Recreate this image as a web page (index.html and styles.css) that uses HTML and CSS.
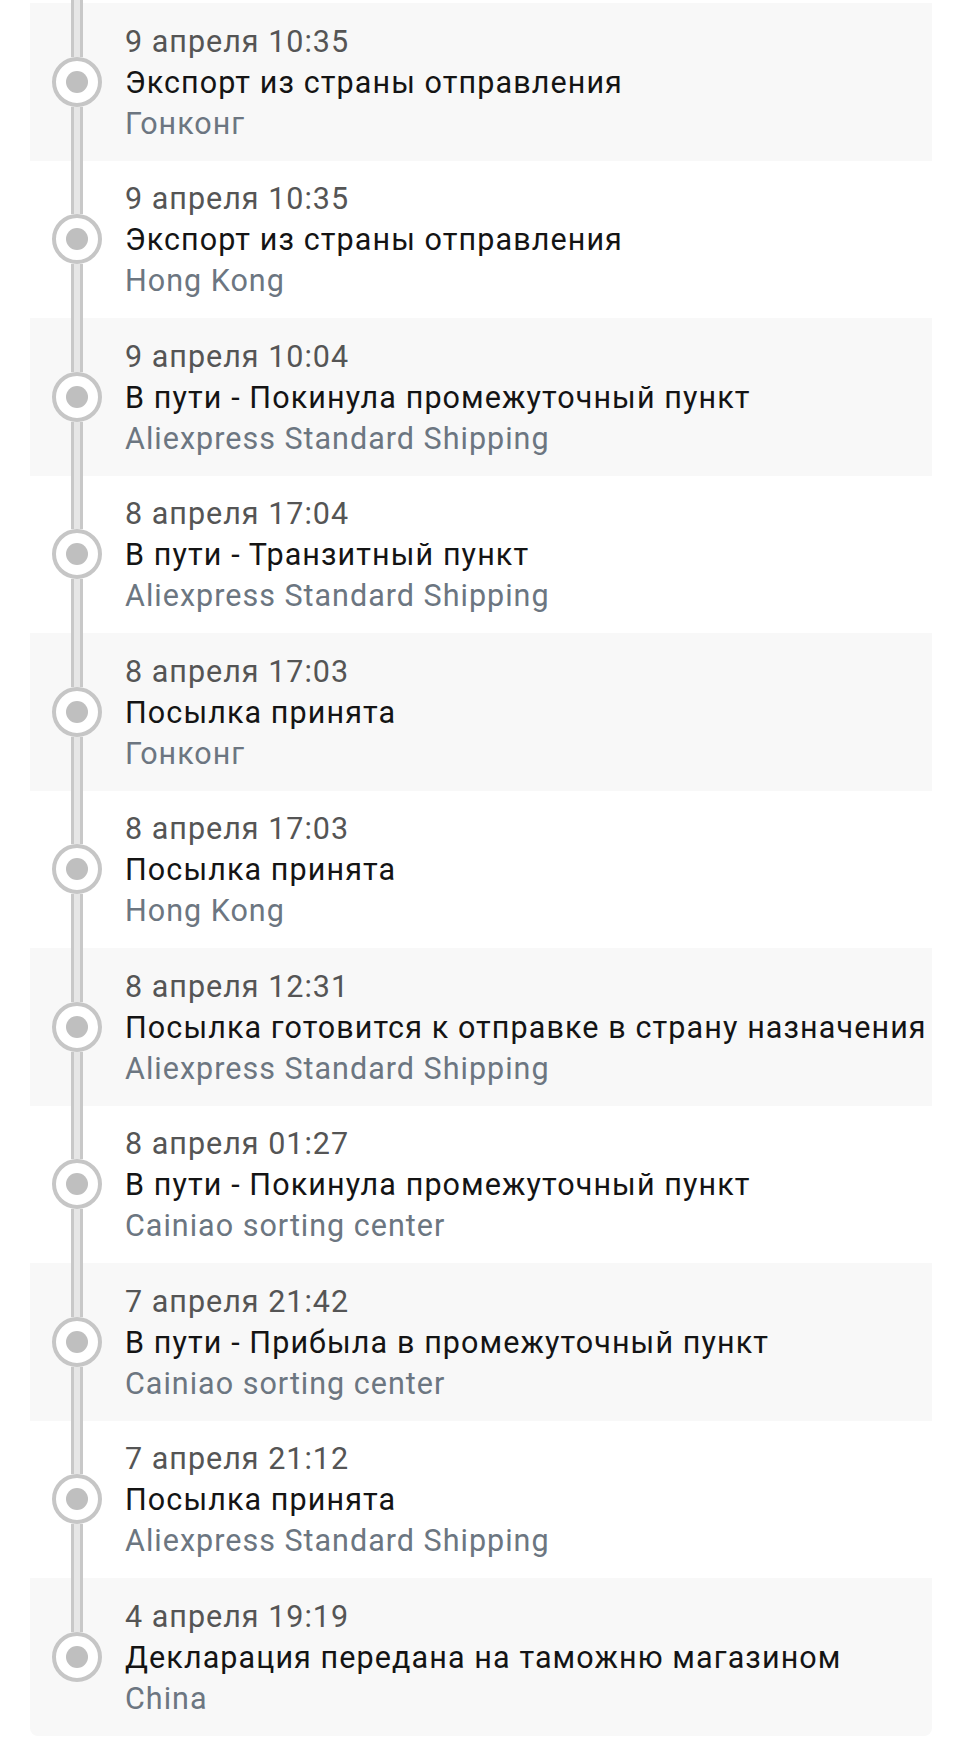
FILE: index.html
```html
<!DOCTYPE html>
<html lang="ru">
<head>
<meta charset="utf-8">
<title>Трекинг</title>
<link rel="stylesheet" href="styles.css">
</head>
<body>
<div class="stub"></div>
<div class="card">
  <div class="row">
    <div class="rail"><span class="seg"></span><span class="dot"></span><span class="seg"></span></div>
    <div class="info"><div class="date">9 апреля 10:35</div><div class="title">Экспорт из страны отправления</div><div class="place">Гонконг</div></div>
  </div>
  <div class="row">
    <div class="rail"><span class="seg"></span><span class="dot"></span><span class="seg"></span></div>
    <div class="info"><div class="date">9 апреля 10:35</div><div class="title">Экспорт из страны отправления</div><div class="place">Hong Kong</div></div>
  </div>
  <div class="row">
    <div class="rail"><span class="seg"></span><span class="dot"></span><span class="seg"></span></div>
    <div class="info"><div class="date">9 апреля 10:04</div><div class="title">В пути - Покинула промежуточный пункт</div><div class="place">Aliexpress Standard Shipping</div></div>
  </div>
  <div class="row">
    <div class="rail"><span class="seg"></span><span class="dot"></span><span class="seg"></span></div>
    <div class="info"><div class="date">8 апреля 17:04</div><div class="title">В пути - Транзитный пункт</div><div class="place">Aliexpress Standard Shipping</div></div>
  </div>
  <div class="row">
    <div class="rail"><span class="seg"></span><span class="dot"></span><span class="seg"></span></div>
    <div class="info"><div class="date">8 апреля 17:03</div><div class="title">Посылка принята</div><div class="place">Гонконг</div></div>
  </div>
  <div class="row">
    <div class="rail"><span class="seg"></span><span class="dot"></span><span class="seg"></span></div>
    <div class="info"><div class="date">8 апреля 17:03</div><div class="title">Посылка принята</div><div class="place">Hong Kong</div></div>
  </div>
  <div class="row">
    <div class="rail"><span class="seg"></span><span class="dot"></span><span class="seg"></span></div>
    <div class="info"><div class="date">8 апреля 12:31</div><div class="title">Посылка готовится к отправке в страну назначения</div><div class="place">Aliexpress Standard Shipping</div></div>
  </div>
  <div class="row">
    <div class="rail"><span class="seg"></span><span class="dot"></span><span class="seg"></span></div>
    <div class="info"><div class="date">8 апреля 01:27</div><div class="title">В пути - Покинула промежуточный пункт</div><div class="place">Cainiao sorting center</div></div>
  </div>
  <div class="row">
    <div class="rail"><span class="seg"></span><span class="dot"></span><span class="seg"></span></div>
    <div class="info"><div class="date">7 апреля 21:42</div><div class="title">В пути - Прибыла в промежуточный пункт</div><div class="place">Cainiao sorting center</div></div>
  </div>
  <div class="row">
    <div class="rail"><span class="seg"></span><span class="dot"></span><span class="seg"></span></div>
    <div class="info"><div class="date">7 апреля 21:12</div><div class="title">Посылка принята</div><div class="place">Aliexpress Standard Shipping</div></div>
  </div>
  <div class="row last">
    <div class="rail"><span class="seg"></span><span class="dot"></span><span class="seg"></span></div>
    <div class="info"><div class="date">4 апреля 19:19</div><div class="title">Декларация передана на таможню магазином</div><div class="place">China</div></div>
  </div>
</div>
</body>
</html>
```
FILE: styles.css
```css
html, body {
  margin: 0;
  padding: 0;
  background: #ffffff;
}

body {
  font-family: Roboto, "Noto Sans", "Liberation Sans", sans-serif;
}

.stub {
  box-sizing: border-box;
  width: 12px;
  height: 3px;
  margin-left: 71px;
  border-left: 3px solid #c8c8c8;
  border-right: 3px solid #c8c8c8;
  background: #e6e6e6;
}

.card {
  width: 902px;
  margin-left: 30px;
  border-radius: 0 0 8px 8px;
  overflow: hidden;
}

.row {
  display: flex;
  align-items: stretch;
  background: #ffffff;
}

.row:nth-child(odd) {
  background: #f8f8f8;
}

.rail {
  width: 94px;
  flex-shrink: 0;
  display: flex;
  flex-direction: column;
  align-items: center;
}

.seg {
  flex: 1;
  box-sizing: border-box;
  width: 12px;
  border-left: 3px solid #c8c8c8;
  border-right: 3px solid #c8c8c8;
  background: #e6e6e6;
}

.last .seg:last-child {
  visibility: hidden;
}

.dot {
  box-sizing: border-box;
  width: 50px;
  height: 50px;
  flex-shrink: 0;
  border: 4px solid #c6c6c6;
  border-radius: 50%;
  background: #ffffff;
  display: flex;
  align-items: center;
  justify-content: center;
}

.dot::after {
  content: "";
  width: 22px;
  height: 22px;
  border-radius: 50%;
  background: #bfbfbf;
}

.info {
  padding: 17.5px 0 17px 1px;
  font-size: 30.5px;
  line-height: 41px;
  letter-spacing: 1px;
  white-space: nowrap;
}

.date {
  color: #555555;
}

.title {
  color: #141414;
  letter-spacing: 1.1px;
}

.place {
  color: #6c7681;
}
```
